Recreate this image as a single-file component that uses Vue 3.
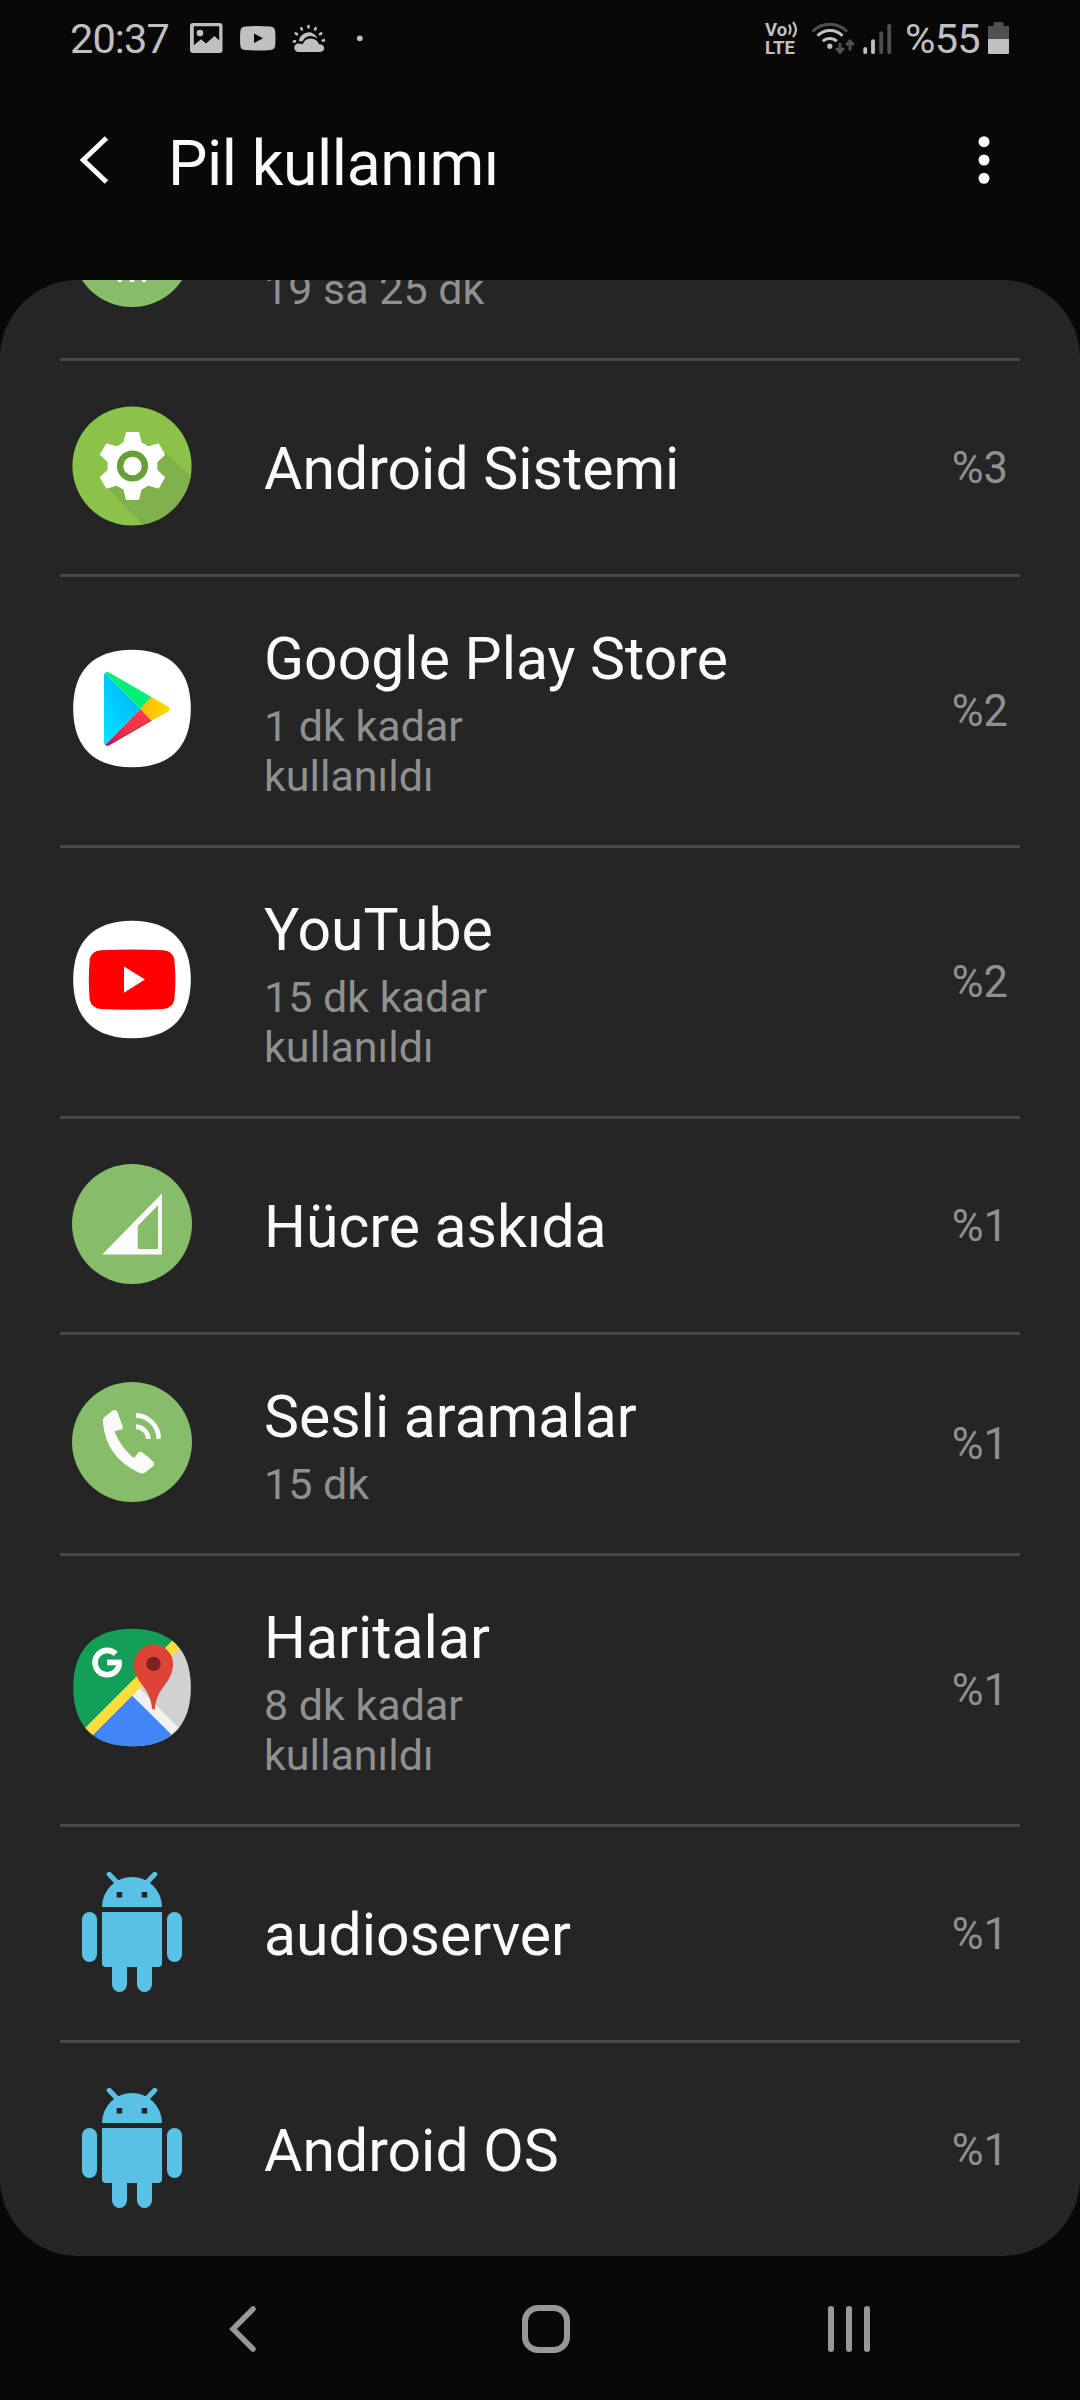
<script setup>
const rows = [
  { icon: 'idle', name: '', detail: '19 sa 25 dk', percent: '', size: 'double' },
  { icon: 'gear', name: 'Android Sistemi', percent: '%3', size: 'single' },
  { icon: 'play', name: 'Google Play Store', detail: '1 dk kadar kullanıldı', percent: '%2', size: 'triple' },
  { icon: 'youtube', name: 'YouTube', detail: '15 dk kadar kullanıldı', percent: '%2', size: 'triple' },
  { icon: 'cell', name: 'Hücre askıda', percent: '%1', size: 'single' },
  { icon: 'phone', name: 'Sesli aramalar', detail: '15 dk', percent: '%1', size: 'double' },
  { icon: 'maps', name: 'Haritalar', detail: '8 dk kadar kullanıldı', percent: '%1', size: 'triple' },
  { icon: 'robot', name: 'audioserver', percent: '%1', size: 'single' },
  { icon: 'robot', name: 'Android OS', percent: '%1', size: 'single' },
]
const squircle = 'M60 .7C98 .7 118.8 21 118.8 59.5S98 118.3 60 118.3 1.2 98 1.2 59.5 22 .7 60 .7Z'
const teeth = [0, 60, 120, 180, 240, 300]
</script>

<template>
  <div class="screen">
    <div class="status">
      <div class="status-left">
        <span class="clock">20:37</span>
        <svg class="notifications" width="184" height="40" viewBox="184 18 184 40">
          <path fill="#c0c0c0" fill-rule="evenodd" d="M193 23h26.500a3 3 0 0 1 3 3v24a3 3 0 0 1-3 3H193a3 3 0 0 1-3-3V26a3 3 0 0 1 3-3zm.8 3.300v18.900l7.200-6 5 4.300 8.500-7.500 4.700 4.500V26.300zM200 29.800a3.300 3.300 0 1 1 0 6.600 3.300 3.300 0 0 1 0-6.600z" />
          <path fill="#c0c0c0" fill-rule="evenodd" d="M245 26.500q12.800-1.200 25.500 0 4.500.5 4.700 5 .5 7 0 14-.3 4-4.700 4.500-12.700 1-25.500 0-4.500-.5-4.700-4.500-.5-7 0-14 .3-4.500 4.700-5zM254 33.500v9.500l9-4.700z" />
          <g stroke="#c0c0c0" stroke-width="2.600" stroke-linecap="round">
            <path d="M308.500 26v1.500M301.300 28.200l.6 1.300M295.700 33.400l1.300.9M293.800 41.500l1.200-.1M315.700 28.200l-.6 1.300M321.300 33.400l-1.300.9M324 40.400l-1.300.1" />
          </g>
          <path fill="#c0c0c0" d="M298.800 41.300a9.700 9.700 0 0 1 18.800-2.500q-2.600-2.500-7.200-2.700-5.400.3-7.800 5.200z" />
          <path fill="#c0c0c0" d="M298.500 52a4.200 4.200 0 0 1 0-8.400q2-.2 4 1 2.200-6 8-6.100 6.500.1 8.400 5.700 5 0 5.300 4-.3 3.800-4.700 3.800z" />
          <circle cx="359.800" cy="38.300" r="2.900" fill="#c0c0c0" />
        </svg>
      </div>
      <div class="status-right">
        <div class="volte">
          <span class="vo">Vo<svg width="10" height="17" viewBox="0 0 10 17" fill="none" stroke="#c0c0c0" stroke-width="2.200"><path d="M1 3.500q3 5 0 10M5 1q6 7.500 0 15" /></svg></span>
          <span>LTE</span>
        </div>
        <svg width="84" height="36" viewBox="809 20 84 36" fill="none">
          <path d="M812.500 31.500a24 24 0 0 1 34.500 0" stroke="#505050" stroke-width="3" />
          <path d="M817.500 35.800a17.500 17.500 0 0 1 25 0" stroke="#c0c0c0" stroke-width="3" />
          <path d="M822.800 41.300a10 10 0 0 1 14 0" stroke="#c0c0c0" stroke-width="3" />
          <circle cx="829.800" cy="46.200" r="2.600" fill="#c0c0c0" />
          <path d="M840 43v9M836.300 48.300l3.700 4 3.700-4M850 50.500v-9M846.300 45l3.700-4 3.700 4" stroke="#505050" stroke-width="3" />
          <g stroke-width="3.800" stroke-linecap="round">
            <path d="M865.200 49v3.200M873 41.200v11" stroke="#c0c0c0" />
            <path d="M881.200 33.200v19M889.200 25.600v26.600" stroke="#505050" />
          </g>
        </svg>
        <span class="charge">%55</span>
        <svg width="21" height="32" viewBox="0 0 21 32">
          <path fill="#505050" d="M5.500 1q0-1 1-1h8q1 0 1 1v3H20q1 0 1 1v12H0V5q0-1 1-1h4.500z" />
          <path fill="#c0c0c0" d="M0 17h21v14q0 1-1 1H1q-1 0-1-1z" />
        </svg>
      </div>
    </div>

    <header class="bar">
      <svg class="back" width="30" height="50" viewBox="79 135 30 50" fill="none">
        <path d="M106.500 138 83.300 160l23.200 22" stroke="#fafafa" stroke-width="5" />
      </svg>
      <h1>Pil kullanımı</h1>
      <svg width="12" height="50" viewBox="0 0 12 50" fill="#fafafa">
        <circle cx="6" cy="6.700" r="5.500" /><circle cx="6" cy="25" r="5.500" /><circle cx="6" cy="43.300" r="5.500" />
      </svg>
    </header>

    <main class="card">
      <div v-for="(row, i) in rows" :key="i" class="row" :class="row.size">
        <svg class="icon" width="120" height="120" viewBox="0 0 120 120">
          <g v-if="row.icon === 'idle'">
            <circle cx="60" cy="60" r="60" fill="#87bd69" />
            <path fill="#fafafa" d="M45.800 84h3.900v11h-3.900zM57.800 84h4.400v11h-4.400zM70 84h4v11h-4z" />
          </g>
          <g v-else-if="row.icon === 'gear'">
            <clipPath id="disc"><circle cx="60" cy="60" r="59.600" /></clipPath>
            <circle cx="60" cy="60" r="59.600" fill="#8bc34a" />
            <path clip-path="url(#disc)" fill="#7fb04a" d="M36 82.500 70 118l26 2 30-44L92 46 60 60z" />
            <g fill="#fff" stroke="#fff" stroke-linejoin="round" stroke-width="2">
              <circle cx="60.500" cy="60" r="24" />
              <path v-for="a in teeth" :key="a" :transform="`rotate(${a} 60.500 60)`" d="M54.700 27h11.600l2.200 9.500q.8 2 4 3.500h-24q3.200-1.500 4-3.500z" />
            </g>
            <circle cx="60.500" cy="60" r="12.400" fill="#fff" stroke="#689f38" stroke-width="6.400" />
          </g>
          <g v-else-if="row.icon === 'play'">
            <linearGradient id="blue" x1="1" y1="0" x2="0" y2="1"><stop offset=".2" stop-color="#00b8ff" /><stop offset="1" stop-color="#00e5ff" /></linearGradient>
            <linearGradient id="amber" x1="1" y1="0" x2="0" y2="0"><stop offset="0" stop-color="#ffd900" /><stop offset="1" stop-color="#ffb900" /></linearGradient>
            <linearGradient id="red" x1="1" y1="0" x2="0" y2="1"><stop offset="0" stop-color="#ff3a44" /><stop offset=".5" stop-color="#f2344a" /><stop offset="1" stop-color="#c31162" /></linearGradient>
            <path :d="squircle" fill="#fff" />
            <path fill="url(#blue)" d="M33.200 23.800 68.500 60 33.200 96q-1.200-.8-1.200-2.500v-67q0-1.900 1.200-2.700z" />
            <path fill="#00ef76" d="M33.200 23.800q1.700-1.500 4-.3L79.500 48l-11 12z" />
            <path fill="url(#amber)" d="m79.500 48 16.500 9.500q4 2.600 0 5.200L79.500 71.800l-11-11.800z" />
            <path fill="url(#red)" d="m79.500 71.800-42.300 24.500q-2.300 1.200-4-.3l35.300-36z" />
            <path fill="none" stroke="#98283f" stroke-opacity=".6" stroke-width="1" d="m79.500 71.400-42.300 24.500q-2.300 1-3.800-.2" />
          </g>
          <g v-else-if="row.icon === 'youtube'">
            <path :d="squircle" fill="#fff" />
            <path fill="red" d="M29 30.200q31-1.500 62 0 9.300.5 11.200 9 2.400 20.300 0 41-1.900 8-11.200 8.800-31 1.500-62 0-9.300-.8-11.200-8.800-2-20.700 0-41 1.900-8.500 11.200-9z" />
            <path fill="#fff" d="M52 46.500v26.300l21-13.200z" />
          </g>
          <g v-else-if="row.icon === 'cell'">
            <circle cx="60" cy="60" r="60" fill="#87bd69" />
            <path fill="#fafafa" fill-rule="evenodd" d="M30.200 90.400 89.900 29.600v60.800zM65.700 85H86V41.300L65.700 62z" />
          </g>
          <g v-else-if="row.icon === 'phone'">
            <circle cx="60" cy="60" r="60" fill="#87bd69" />
            <path fill="#fafafa" d="M32.300 35.200 40 28.900q3.400-2 5.500 1l5.200 14.800q.6 2.600-1.800 3.100l-4.800.8q-1.500.5-.9 2.300 5 13 17.300 24 1.600 1.200 3-.4l2.400-3.500q1.700-2 4-.7 7 4.600 12 10.200 1 1.700-.5 3.600l-8.200 6.500q-2.300 1.600-5 .6Q34 76 31 41q-.5-4 1.300-5.800z" />
            <path fill="none" stroke="#fafafa" stroke-width="4.600" d="M64 33.400c12.500.4 22.600 10.600 22.700 23.600M64 44.600c6.800.4 12.400 6 12.400 12.400" />
          </g>
          <g v-else-if="row.icon === 'maps'">
            <clipPath id="tile"><path :d="squircle" /></clipPath>
            <g clip-path="url(#tile)">
              <path fill="#139f58" d="M0 0h120v120H0z" />
              <path fill="#d1d1d1" d="M127 0v120H60V67.500z" />
              <path fill="#f1f1f1" d="m67.500 60.200 52 52.800v7H105L60 75v-8z" />
              <path fill="#4285f4" d="m60 67.500 53 52.500H7.500z" />
              <path fill="#ffdd3c" d="M113 0h15L8 120-7 120z" />
            </g>
            <circle cx="35.200" cy="34.600" r="12.200" fill="none" stroke="#fff" stroke-width="5.600" stroke-dasharray="66.500 20" />
            <path fill="#fff" d="M35.200 31.600h14.400v5.700H35.200z" />
            <path fill="#db4437" d="M80 80.500C79.500 71 75 63 69.500 56 65.500 50.500 61.900 44 61.900 36a19.600 19.600 0 0 1 39.200 0c0 8-3.600 14.500-7.600 20C88 63 83.500 71 83 80.500q-1.500 2-3 0z" />
            <circle cx="81.500" cy="35.900" r="7.200" fill="#7b231e" />
          </g>
          <g v-else fill="#58c1e5">
            <path fill-rule="evenodd" d="M30 35a30 30 0 0 1 60 0zM44.700 20v5.400h5.500V20zM69.700 20v5.400h5.500V20z" />
            <path d="M37.200 2.200 46 11.500M82.800 2.200 74 11.500" stroke="#58c1e5" stroke-width="5" stroke-linecap="round" />
            <path d="M30 40h60v51q0 4-4 4H34q-4 0-4-4z" />
            <rect x="10" y="40" width="15" height="50" rx="7.500" /><rect x="95" y="40" width="15" height="50" rx="7.500" />
            <rect x="40" y="85" width="15" height="35" rx="7.500" /><rect x="65" y="85" width="15" height="35" rx="7.500" />
          </g>
        </svg>
        <div class="copy">
          <div class="name">{{ row.name }}</div>
          <div v-if="row.detail" class="detail">{{ row.detail }}</div>
        </div>
        <div class="percent">{{ row.percent }}</div>
      </div>
    </main>

    <nav class="nav">
      <svg width="30" height="50" viewBox="0 0 30 50" fill="none">
        <path d="M25 5 5 25l20 20" stroke="#989898" stroke-width="5.500" stroke-linecap="round" />
      </svg>
      <span class="home"></span>
      <span class="recents"><b></b><b></b><b></b></span>
    </nav>
  </div>
</template>

<style>
body {
  background: #080808;
}
</style>

<style scoped>
.screen {
  display: flex;
  flex-direction: column;
  width: 1080px;
  height: 2400px;
  overflow: hidden;
  background: #080808;
  color: #fafafa;
  font-family: Roboto, sans-serif;
}
.status {
  display: flex;
  justify-content: space-between;
  box-sizing: border-box;
  height: 80px;
  padding: 18px 71px 0 70px;
  color: #c0c0c0;
}
.status-left,
.status-right {
  display: flex;
  align-items: center;
  height: 40px;
}
.clock {
  width: 114px;
  padding-top: 1px;
  font-size: 41.500px;
  letter-spacing: -0.900px;
  line-height: 40px;
  white-space: nowrap;
}
.volte {
  display: flex;
  flex-direction: column;
  width: 34px;
  margin-right: 10px;
  padding-top: 1px;
  font-size: 18.500px;
  font-weight: 700;
  line-height: 18px;
  white-space: nowrap;
}
.vo {
  display: flex;
  height: 18px;
}
.vo svg {
  margin-left: 1px;
}
.charge {
  margin: 0 8px 0 12px;
  padding-top: 1px;
  font-size: 41.500px;
  letter-spacing: -0.700px;
  line-height: 40px;
}
.bar {
  display: flex;
  align-items: center;
  box-sizing: border-box;
  height: 200px;
  padding: 0 90px 40px 79px;
}
h1 {
  flex: 1;
  margin: 7px 0 0 59px;
  font-size: 62.500px;
  letter-spacing: -0.400px;
  font-weight: 400;
  line-height: 74px;
}
.card {
  box-sizing: border-box;
  height: 1976px;
  padding: 0 60px;
  overflow: hidden;
  border-radius: 78px;
  background: #252525;
}
.row {
  display: flex;
  align-items: center;
  box-sizing: border-box;
  padding: 0 12px;
  box-shadow: inset 0 3px 0 #484848;
}
.row:first-child {
  margin-top: -143px;
}
.single {
  height: 216px;
}
.double {
  height: 221px;
}
.triple {
  height: 271px;
}
.double .icon,
.triple .icon {
  margin-bottom: 1px;
}
.icon {
  flex: none;
}
.copy {
  flex: 1;
  padding-top: 6px;
  margin-left: 72px;
}
.name {
  height: 69px;
  font-size: 58.900px;
  line-height: 67px;
  white-space: nowrap;
}
.detail {
  width: 300px;
  margin-top: 7px;
  color: #909090;
  font-size: 43px;
  line-height: 50px;
}
.percent {
  padding-top: 6px;
  color: #909090;
  font-size: 43.500px;
  line-height: 50px;
}
.double .percent,
.triple .percent {
  padding-top: 5px;
}
.nav {
  display: flex;
  align-items: center;
  justify-content: space-between;
  box-sizing: border-box;
  height: 144px;
  padding: 2px 210px 0 228px;
}
.home {
  box-sizing: border-box;
  width: 48px;
  height: 48px;
  margin-left: 6px;
  border: 6px solid #989898;
  border-radius: 16px;
}
.recents {
  display: flex;
  gap: 12px;
}
.recents b {
  width: 6px;
  height: 46px;
  border-radius: 3px;
  background: #989898;
}
</style>
